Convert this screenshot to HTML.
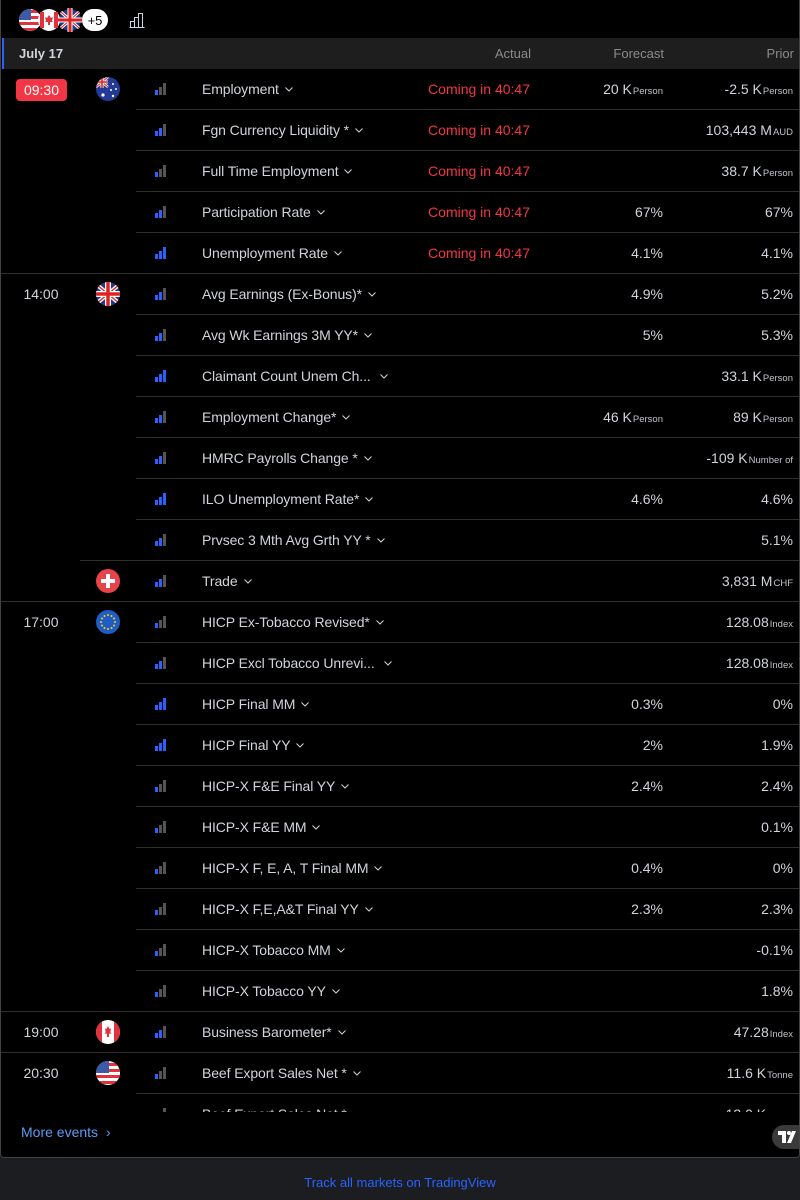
<!DOCTYPE html>
<html><head><meta charset="utf-8"><style>
*{margin:0;padding:0;box-sizing:border-box}
body{width:800px;height:1200px;background:#1c1d21;font-family:"Liberation Sans","DejaVu Sans",sans-serif;color:#d1d4dc;overflow:hidden;position:relative}
#box{position:absolute;left:0;top:0;width:800px;height:1158px;background:#000;border:1px solid #434343;border-top:none;border-radius:0 0 4px 4px;overflow:hidden}
.hdr{position:absolute;left:1px;top:38px;width:798px;height:31px;background:#1e1e1e;border-left:2px solid #2962ff;font-size:13px}
.hdr span{position:absolute;top:8px;color:#8a8a8a}
.rows{position:absolute;left:0;top:69px;width:800px;height:1043px;overflow:hidden}
.r{position:absolute;left:0;width:800px;height:41px;font-size:14px}
.r .t{position:absolute;left:201px;top:12px;color:#d1d4dc;white-space:nowrap;letter-spacing:-0.1px}
.r .t svg{margin-left:6px;vertical-align:middle;position:relative;top:-1px}
.r .a{position:absolute;right:271px;top:12px;color:#f23645}
.r .f{position:absolute;right:138px;top:12px}
.r .p{position:absolute;right:8px;top:12px}
.u{font-size:9.5px;margin-left:1px;color:#c0c3cb}
.bars{position:absolute;left:154px;top:14px;width:12px;height:12px}
.bars b{position:absolute;bottom:0;width:3px;background:#555}
.bars b:nth-child(1){left:0;height:5px}
.bars b:nth-child(2){left:4px;height:8px}
.bars b:nth-child(3){left:8px;height:12px}
.l1 b:nth-child(1),.l2 b:nth-child(1),.l2 b:nth-child(2),.l3 b{background:#2962ff}
.sep{position:absolute;height:1px;background:#2f2f2f;right:0}
.time{position:absolute;width:80px;text-align:center;font-size:14px;color:#d1d4dc}
.flag{position:absolute;left:95px;width:24px;height:24px}
</style></head><body>
<svg width="0" height="0" style="position:absolute"><defs><symbol id="ch" viewBox="0 0 8 5"><path d="M0.5 0.5L4 4L7.5 0.5" fill="none" stroke="#d1d4dc" stroke-width="1"/></symbol></defs></svg>
<div id="box">
<svg style="position:absolute;left:17px;top:8px" width="92" height="24" viewBox="0 0 92 24">
 <defs><clipPath id="c1"><circle cx="12" cy="12" r="11"/></clipPath></defs>
 <g clip-path="url(#c1)"><rect width="24" height="24" fill="#fff"/><rect y="2" width="24" height="3" fill="#e0323c"/><rect y="8" width="24" height="3" fill="#e0323c"/><rect y="14" width="24" height="3" fill="#e0323c"/><rect y="20" width="24" height="3" fill="#e0323c"/><rect width="13" height="12" fill="#3c5aa8"/></g>
 <circle cx="31" cy="12" r="11" fill="#fff"/><path d="M22 4h4v16h-4zM36 4h4v16h-4z" fill="#e0323c"/><path d="M31 7l2 3 2-1-1 4 1 1h-3v3h-2v-3h-3l1-1-1-4 2 1z" fill="#e0323c"/>
 <circle cx="52" cy="12" r="11" fill="#233b86"/><path d="M43 4l18 16M61 4L43 20" stroke="#fff" stroke-width="3"/><path d="M43 4l18 16M61 4L43 20" stroke="#d22" stroke-width="1"/><path d="M52 0v24M40 12h24" stroke="#fff" stroke-width="5"/><path d="M52 0v24M40 12h24" stroke="#d22" stroke-width="3"/>
 <rect x="64" y="1" width="26" height="22" rx="11" fill="#fff"/><text x="77" y="17" font-size="13" text-anchor="middle" fill="#000" font-family="Liberation Sans">+5</text>
</svg>
<svg style="position:absolute;left:128px;top:12px" width="16" height="16" viewBox="0 0 16 16" fill="none" stroke="#d1d4dc" stroke-width="1"><path d="M0.5 15.5h15M1.5 15.5v-6h4v6M5.5 15.5v-10h4v10M9.5 15.5v-14h4v14"/></svg>
<div class="hdr"><span style="left:15px;top:8px;color:#d1d4dc;font-weight:bold">July 17</span><span style="right:269px">Actual</span><span style="right:136px">Forecast</span><span style="right:6px">Prior</span></div>
<div class="rows">
<div style="position:absolute;left:15px;top:10px;width:51px;height:22px;background:#f23645;border-radius:4px;color:#fff;font-size:14px;text-align:center;line-height:22px">09:30</div>
<div class="time" style="top:217px">14:00</div>
<div class="time" style="top:545px">17:00</div>
<div class="time" style="top:955px">19:00</div>
<div class="time" style="top:996px">20:30</div>
<svg class="flag" style="top:8px" viewBox="0 0 24 24"><defs><clipPath id="a"><circle cx="12" cy="12" r="12"/></clipPath></defs><g clip-path="url(#a)"><rect width="24" height="24" fill="#233b96"/><path d="M0 0l12 10M12 0L0 10" stroke="#fff" stroke-width="2.5"/><path d="M0 0l12 10M12 0L0 10" stroke="#d22" stroke-width="1"/><path d="M6 0v11M0 5h12" stroke="#fff" stroke-width="3"/><path d="M6 0v11M0 5h12" stroke="#d22" stroke-width="1.6"/></g><g fill="#fff"><circle cx="7" cy="18" r="1.6"/><circle cx="17" cy="7" r="1"/><circle cx="20" cy="12" r="1"/><circle cx="15" cy="13" r="1"/><circle cx="17" cy="19" r="1.2"/></g></svg>
<svg class="flag" style="top:213px" viewBox="0 0 24 24"><defs><clipPath id="b"><circle cx="12" cy="12" r="12"/></clipPath></defs><g clip-path="url(#b)"><rect width="24" height="24" fill="#233b86"/><path d="M0 2l24 20M24 2L0 22" stroke="#fff" stroke-width="4"/><path d="M0 2l24 20M24 2L0 22" stroke="#d22" stroke-width="1.3"/><path d="M12 0v24M0 12h24" stroke="#fff" stroke-width="6"/><path d="M12 0v24M0 12h24" stroke="#d22" stroke-width="3.5"/></g></svg>
<svg class="flag" style="top:500px" viewBox="0 0 24 24"><circle cx="12" cy="12" r="12" fill="#e8434a"/><path d="M10 5h4v5h5v4h-5v5h-4v-5H5v-4h5z" fill="#fff"/></svg>
<svg class="flag" style="top:541px" viewBox="0 0 24 24"><circle cx="12" cy="12" r="12" fill="#1f5cc4"/><g fill="#f5d020"><circle cx="12" cy="5" r="1"/><circle cx="15.5" cy="6" r="1"/><circle cx="18" cy="8.5" r="1"/><circle cx="19" cy="12" r="1"/><circle cx="18" cy="15.5" r="1"/><circle cx="15.5" cy="18" r="1"/><circle cx="12" cy="19" r="1"/><circle cx="8.5" cy="18" r="1"/><circle cx="6" cy="15.5" r="1"/><circle cx="5" cy="12" r="1"/><circle cx="6" cy="8.5" r="1"/><circle cx="8.5" cy="6" r="1"/></g></svg>
<svg class="flag" style="top:951px" viewBox="0 0 24 24"><defs><clipPath id="d"><circle cx="12" cy="12" r="12"/></clipPath></defs><g clip-path="url(#d)"><rect width="24" height="24" fill="#fff"/><rect width="6" height="24" fill="#e0323c"/><rect x="18" width="6" height="24" fill="#e0323c"/></g><path d="M12 6l1.5 3 1.5-.8-.7 4 1.4 1.4H13v3.4h-2v-3.4H8.3l1.4-1.4-.7-4 1.5.8z" fill="#e0323c"/></svg>
<svg class="flag" style="top:992px" viewBox="0 0 24 24"><defs><clipPath id="e"><circle cx="12" cy="12" r="12"/></clipPath></defs><g clip-path="url(#e)"><rect width="24" height="24" fill="#fff"/><rect y="2" width="24" height="3" fill="#e0323c"/><rect y="8" width="24" height="3" fill="#e0323c"/><rect y="14" width="24" height="3" fill="#e0323c"/><rect y="20" width="24" height="3" fill="#e0323c"/><rect width="13" height="12" fill="#3c5aa8"/></g></svg>

<div class="r" style="top:0"><div class="bars l1"><b></b><b></b><b></b></div><div class="t">Employment<svg width="8" height="5"><use href="#ch"/></svg></div><div class="a">Coming in 40:47</div><div class="f">20 K<span class="u">Person</span></div><div class="p">-2.5 K<span class="u">Person</span></div></div>
<div class="r" style="top:41px"><div class="bars l2"><b></b><b></b><b></b></div><div class="t">Fgn Currency Liquidity *<svg width="8" height="5"><use href="#ch"/></svg></div><div class="a">Coming in 40:47</div><div class="p">103,443 M<span class="u">AUD</span></div></div>
<div class="r" style="top:82px"><div class="bars l1"><b></b><b></b><b></b></div><div class="t">Full Time Employment<svg width="8" height="5"><use href="#ch"/></svg></div><div class="a">Coming in 40:47</div><div class="p">38.7 K<span class="u">Person</span></div></div>
<div class="r" style="top:123px"><div class="bars l2"><b></b><b></b><b></b></div><div class="t">Participation Rate<svg width="8" height="5"><use href="#ch"/></svg></div><div class="a">Coming in 40:47</div><div class="f">67%</div><div class="p">67%</div></div>
<div class="r" style="top:164px"><div class="bars l3"><b></b><b></b><b></b></div><div class="t">Unemployment Rate<svg width="8" height="5"><use href="#ch"/></svg></div><div class="a">Coming in 40:47</div><div class="f">4.1%</div><div class="p">4.1%</div></div>
<div class="r" style="top:205px"><div class="bars l2"><b></b><b></b><b></b></div><div class="t">Avg Earnings (Ex-Bonus)*<svg width="8" height="5"><use href="#ch"/></svg></div><div class="f">4.9%</div><div class="p">5.2%</div></div>
<div class="r" style="top:246px"><div class="bars l2"><b></b><b></b><b></b></div><div class="t">Avg Wk Earnings 3M YY*<svg width="8" height="5"><use href="#ch"/></svg></div><div class="f">5%</div><div class="p">5.3%</div></div>
<div class="r" style="top:287px"><div class="bars l3"><b></b><b></b><b></b></div><div class="t">Claimant Count Unem Ch...<svg width="8" height="5" style="margin-left:9px"><use href="#ch"/></svg></div><div class="p">33.1 K<span class="u">Person</span></div></div>
<div class="r" style="top:328px"><div class="bars l2"><b></b><b></b><b></b></div><div class="t">Employment Change*<svg width="8" height="5"><use href="#ch"/></svg></div><div class="f">46 K<span class="u">Person</span></div><div class="p">89 K<span class="u">Person</span></div></div>
<div class="r" style="top:369px"><div class="bars l2"><b></b><b></b><b></b></div><div class="t">HMRC Payrolls Change *<svg width="8" height="5"><use href="#ch"/></svg></div><div class="p">-109 K<span class="u">Number of</span></div></div>
<div class="r" style="top:410px"><div class="bars l3"><b></b><b></b><b></b></div><div class="t">ILO Unemployment Rate*<svg width="8" height="5"><use href="#ch"/></svg></div><div class="f">4.6%</div><div class="p">4.6%</div></div>
<div class="r" style="top:451px"><div class="bars l2"><b></b><b></b><b></b></div><div class="t">Prvsec 3 Mth Avg Grth YY *<svg width="8" height="5"><use href="#ch"/></svg></div><div class="p">5.1%</div></div>
<div class="r" style="top:492px"><div class="bars l2"><b></b><b></b><b></b></div><div class="t">Trade<svg width="8" height="5"><use href="#ch"/></svg></div><div class="p">3,831 M<span class="u">CHF</span></div></div>
<div class="r" style="top:533px"><div class="bars l1"><b></b><b></b><b></b></div><div class="t">HICP Ex-Tobacco Revised*<svg width="8" height="5"><use href="#ch"/></svg></div><div class="p">128.08<span class="u">Index</span></div></div>
<div class="r" style="top:574px"><div class="bars l2"><b></b><b></b><b></b></div><div class="t">HICP Excl Tobacco Unrevi...<svg width="8" height="5" style="margin-left:9px"><use href="#ch"/></svg></div><div class="p">128.08<span class="u">Index</span></div></div>
<div class="r" style="top:615px"><div class="bars l3"><b></b><b></b><b></b></div><div class="t">HICP Final MM<svg width="8" height="5"><use href="#ch"/></svg></div><div class="f">0.3%</div><div class="p">0%</div></div>
<div class="r" style="top:656px"><div class="bars l3"><b></b><b></b><b></b></div><div class="t">HICP Final YY<svg width="8" height="5"><use href="#ch"/></svg></div><div class="f">2%</div><div class="p">1.9%</div></div>
<div class="r" style="top:697px"><div class="bars l1"><b></b><b></b><b></b></div><div class="t">HICP-X F&amp;E Final YY<svg width="8" height="5"><use href="#ch"/></svg></div><div class="f">2.4%</div><div class="p">2.4%</div></div>
<div class="r" style="top:738px"><div class="bars l1"><b></b><b></b><b></b></div><div class="t">HICP-X F&amp;E MM<svg width="8" height="5"><use href="#ch"/></svg></div><div class="p">0.1%</div></div>
<div class="r" style="top:779px"><div class="bars l1"><b></b><b></b><b></b></div><div class="t">HICP-X F, E, A, T Final MM<svg width="8" height="5"><use href="#ch"/></svg></div><div class="f">0.4%</div><div class="p">0%</div></div>
<div class="r" style="top:820px"><div class="bars l1"><b></b><b></b><b></b></div><div class="t">HICP-X F,E,A&amp;T Final YY<svg width="8" height="5"><use href="#ch"/></svg></div><div class="f">2.3%</div><div class="p">2.3%</div></div>
<div class="r" style="top:861px"><div class="bars l1"><b></b><b></b><b></b></div><div class="t">HICP-X Tobacco MM<svg width="8" height="5"><use href="#ch"/></svg></div><div class="p">-0.1%</div></div>
<div class="r" style="top:902px"><div class="bars l1"><b></b><b></b><b></b></div><div class="t">HICP-X Tobacco YY<svg width="8" height="5"><use href="#ch"/></svg></div><div class="p">1.8%</div></div>
<div class="r" style="top:943px"><div class="bars l2"><b></b><b></b><b></b></div><div class="t">Business Barometer*<svg width="8" height="5"><use href="#ch"/></svg></div><div class="p">47.28<span class="u">Index</span></div></div>
<div class="r" style="top:984px"><div class="bars l1"><b></b><b></b><b></b></div><div class="t">Beef Export Sales Net *<svg width="8" height="5"><use href="#ch"/></svg></div><div class="p">11.6 K<span class="u">Tonne</span></div></div>
<div class="r" style="top:1025px"><div class="bars l1"><b></b><b></b><b></b></div><div class="t">Beef Export Sales Net *<svg width="8" height="5"><use href="#ch"/></svg></div><div class="p">13.0 K<span class="u">Tonne</span></div></div>

<div class="sep" style="top:40px;left:135px"></div>
<div class="sep" style="top:81px;left:135px"></div>
<div class="sep" style="top:122px;left:135px"></div>
<div class="sep" style="top:163px;left:135px"></div>
<div class="sep" style="top:204px;left:0"></div>
<div class="sep" style="top:245px;left:135px"></div>
<div class="sep" style="top:286px;left:135px"></div>
<div class="sep" style="top:327px;left:135px"></div>
<div class="sep" style="top:368px;left:135px"></div>
<div class="sep" style="top:409px;left:135px"></div>
<div class="sep" style="top:450px;left:135px"></div>
<div class="sep" style="top:491px;left:79px"></div>
<div class="sep" style="top:532px;left:0"></div>
<div class="sep" style="top:573px;left:135px"></div>
<div class="sep" style="top:614px;left:135px"></div>
<div class="sep" style="top:655px;left:135px"></div>
<div class="sep" style="top:696px;left:135px"></div>
<div class="sep" style="top:737px;left:135px"></div>
<div class="sep" style="top:778px;left:135px"></div>
<div class="sep" style="top:819px;left:135px"></div>
<div class="sep" style="top:860px;left:135px"></div>
<div class="sep" style="top:901px;left:135px"></div>
<div class="sep" style="top:942px;left:0"></div>
<div class="sep" style="top:983px;left:0"></div>
<div class="sep" style="top:1024px;left:135px"></div>
</div>
<div style="position:absolute;left:0;top:1112px;width:800px;height:46px;background:#000"></div>
<div style="position:absolute;left:20px;top:1124px;font-size:14px;color:#5b9cf6">More events <span style="margin-left:4px">›</span></div>
<div style="position:absolute;left:771px;top:1125px;width:30px;height:24px;background:#3a3a3a;border-radius:12px 0 0 12px"><svg style="position:absolute;left:6px;top:6px" width="18" height="12" viewBox="0 0 18 12"><path d="M0 0h8v12H4V4H0z" fill="#fff"/><circle cx="11" cy="2" r="2" fill="#fff"/><path d="M14 0h4l-5 12H9z" fill="#fff"/></svg></div>
</div>
<div style="position:absolute;left:0;top:1175px;width:800px;text-align:center;font-size:13px;color:#2962ff">Track all markets on TradingView</div>
</body></html>
